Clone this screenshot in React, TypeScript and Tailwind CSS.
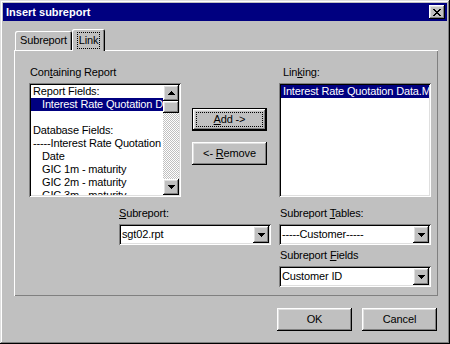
import type { ReactNode } from 'react'

const RAISED = 'shadow-[inset_-1px_-1px_#000,inset_1px_1px_#fff,inset_-2px_-2px_#808080,inset_2px_2px_#dfdfdf]'
const SUNKEN = 'shadow-[inset_1px_1px_#808080,inset_-1px_-1px_#fff,inset_2px_2px_#000,inset_-2px_-2px_#dfdfdf]'

function Arrow({ up = false }: { up?: boolean }) {
  return (
    <svg width="7" height="4" viewBox="0 0 7 4" shapeRendering="crispEdges">
      <path
        fill="#000"
        d={up ? 'M3 0h1v1h1v1h1v1h1v1H0V3h1V2h1V1h1z' : 'M0 0h7v1H6v1H5v1H4v1H3V3H2V2H1V1H0z'}
      />
    </svg>
  )
}

function CloseGlyph() {
  return (
    <svg width="8" height="7" viewBox="0 0 8 7" shapeRendering="crispEdges">
      <path
        fill="#000"
        d="M0 0h2v1H0zM6 0h2v1H6zM1 1h2v1H1zM5 1h2v1H5zM2 2h4v1H2zM3 3h2v1H3zM2 4h4v1H2zM1 5h2v1H1zM5 5h2v1H5zM0 6h2v1H0zM6 6h2v1H6z"
      />
    </svg>
  )
}

function Row({ text, indent = false, selected = false }: { text: string; indent?: boolean; selected?: boolean }) {
  return (
    <div
      className={`h-[13px] leading-[13px] whitespace-nowrap overflow-hidden ${indent ? 'pl-[11px]' : 'pl-[2px]'} ${
        selected ? 'bg-[#000080] text-white' : 'text-black'
      }`}
    >
      {text || '\u00a0'}
    </div>
  )
}

function ScrollBar() {
  return (
    <div className="w-[16px] flex flex-col shrink-0">
      <div className={`h-[16px] bg-[#c0c0c0] ${RAISED} flex items-center justify-center`}>
        <Arrow up />
      </div>
      <div className={`h-[12px] bg-[#c0c0c0] ${RAISED}`} />
      <div className="flex-1 bg-[repeating-conic-gradient(#fff_0%_25%,#c0c0c0_0%_50%)] bg-[length:2px_2px]" />
      <div className={`h-[16px] bg-[#c0c0c0] ${RAISED} flex items-center justify-center`}>
        <Arrow />
      </div>
    </div>
  )
}

function Combo({ value }: { value: string }) {
  return (
    <div className={`h-[21px] bg-white ${SUNKEN} p-[2px] flex`}>
      <div className="flex-1 pl-[1px] leading-[17px] text-black whitespace-nowrap overflow-hidden">{value}</div>
      <div className={`w-[16px] bg-[#c0c0c0] ${RAISED} flex items-center justify-center`}>
        <Arrow />
      </div>
    </div>
  )
}

function Button({ children, isDefault = false }: { children: ReactNode; isDefault?: boolean }) {
  if (isDefault) {
    return (
      <div className="w-[75px] h-[23px] border border-black">
        <div className={`w-full h-full bg-[#c0c0c0] ${RAISED} p-[3px]`}>
          <div className="w-full h-full border border-dotted border-black flex items-center justify-center text-black">
            {children}
          </div>
        </div>
      </div>
    )
  }
  return (
    <div className={`w-[75px] h-[23px] bg-[#c0c0c0] ${RAISED} flex items-center justify-center text-black`}>
      {children}
    </div>
  )
}

function Label({ children, className = '' }: { children: ReactNode; className?: string }) {
  return <div className={`h-[17px] leading-[13px] text-black whitespace-nowrap ${className}`}>{children}</div>
}

export default function App() {
  return (
    <div
      className={`w-[450px] h-[344px] bg-[#c0c0c0] p-[3px] flex flex-col text-[11px] font-['Liberation_Sans',Arial,sans-serif] shadow-[inset_-1px_-1px_#000,inset_1px_1px_#dfdfdf,inset_-2px_-2px_#808080,inset_2px_2px_#fff]`}
    >
      {/* title bar */}
      <div className="h-[18px] bg-[#000080] flex items-center justify-between pl-[3px] pr-[2px]">
        <span className="text-white font-bold leading-[13px]">Insert subreport</span>
        <div className={`w-[16px] h-[14px] bg-[#c0c0c0] ${RAISED} flex items-center justify-center`}>
          <CloseGlyph />
        </div>
      </div>

      <div className="flex flex-col tracking-[-0.15px]">
        {/* tabs */}
        <div className="mt-[8px] h-[21px] flex items-end pl-[12px]">
          <div className="w-[57px] h-[19px] rounded-t-[2px] shadow-[inset_1px_1px_#fff,inset_-1px_0_#000,inset_-2px_0_#808080] flex items-center justify-center text-black">
            Subreport
          </div>
          <div className="relative z-10 -mb-[1px] w-[33px] h-[22px] bg-[#c0c0c0] rounded-t-[2px] shadow-[inset_1px_1px_#fff,inset_-1px_0_#000,inset_-2px_0_#808080] flex justify-center pt-[3px]">
            <span className="h-[17px] px-[1px] border border-dotted border-black leading-[14px] text-black">Link</span>
          </div>
        </div>

        {/* panel */}
        <div className="ml-[11px] w-[424px] h-[246px] shadow-[inset_1px_1px_#fff,inset_-1px_-1px_#808080] pt-[16px] pl-[15px]">
          <div className="flex">
            <div className="w-[152px]">
              <Label className="pl-[1px]">
                Con<u>t</u>aining Report
              </Label>
              <div className={`h-[114px] bg-white ${SUNKEN} p-[2px] flex`}>
                <div className="flex-1 min-w-0 overflow-hidden">
                  <Row text="Report Fields:" />
                  <Row text="Interest Rate Quotation Data" indent selected />
                  <Row text="" />
                  <Row text="Database Fields:" />
                  <Row text="-----Interest Rate Quotation Data-----" />
                  <Row text="Date" indent />
                  <Row text="GIC 1m - maturity" indent />
                  <Row text="GIC 2m - maturity" indent />
                  <Row text="GIC 3m - maturity" indent />
                </div>
                <ScrollBar />
              </div>
            </div>

            <div className="ml-[11px] pt-[42px] flex flex-col gap-[11px]">
              <Button isDefault>
                <span>
                  <u>A</u>dd -&gt;
                </span>
              </Button>
              <Button>
                <span>
                  &lt;- <u>R</u>emove
                </span>
              </Button>
            </div>

            <div className="ml-[12px] w-[152px]">
              <Label className="pl-[4px]">
                Lin<u>k</u>ing:
              </Label>
              <div className={`h-[114px] bg-white ${SUNKEN} p-[2px]`}>
                <Row text="Interest Rate Quotation Data.Maturity" selected />
              </div>
            </div>
          </div>

          <div className="mt-[10px] pl-[90px] flex">
            <div className="w-[152px]">
              <Label>
                <u>S</u>ubreport:
              </Label>
              <Combo value="sgt02.rpt" />
            </div>
            <div className="ml-[8px] w-[152px]">
              <Label className="pl-[1px]">
                Subreport <u>T</u>ables:
              </Label>
              <Combo value="-----Customer-----" />
              <Label className="pl-[1px] mt-[4px]">
                Subreport <u>F</u>ields
              </Label>
              <Combo value="Customer ID" />
            </div>
          </div>
        </div>

        {/* dialog buttons */}
        <div className="mt-[12px] flex justify-end gap-[10px] pr-[10px]">
          <Button>OK</Button>
          <Button>Cancel</Button>
        </div>
      </div>
    </div>
  )
}
